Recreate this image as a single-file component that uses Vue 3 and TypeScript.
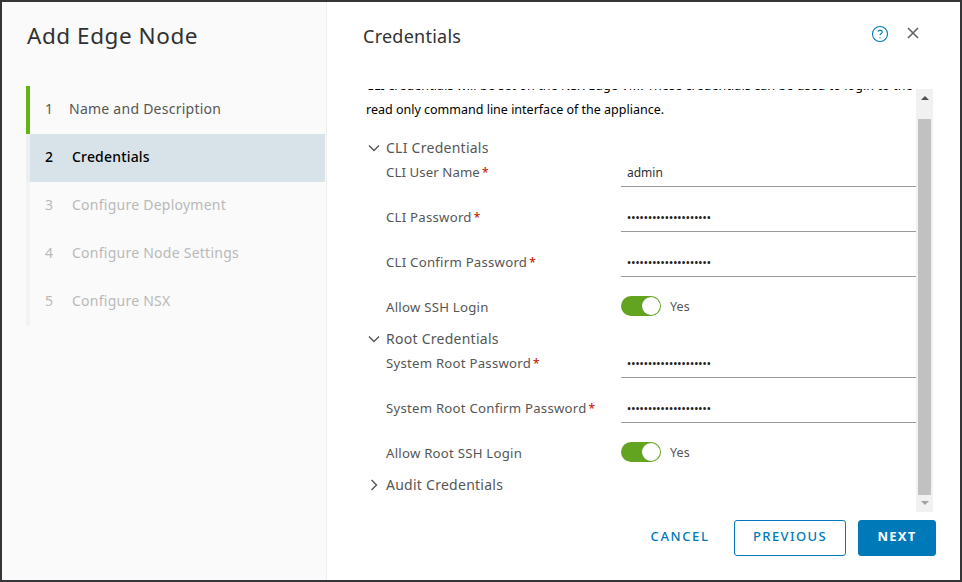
<script setup lang="ts">
import { ref } from 'vue'

interface Step {
  label: string
  state: 'done' | 'active' | 'pending'
}

interface Field {
  label: string
  kind: 'text' | 'password' | 'toggle'
  value: string
}

interface Section {
  title: string
  open: boolean
  fields: Field[]
}

const steps: Step[] = [
  { label: 'Name and Description', state: 'done' },
  { label: 'Credentials', state: 'active' },
  { label: 'Configure Deployment', state: 'pending' },
  { label: 'Configure Node Settings', state: 'pending' },
  { label: 'Configure NSX', state: 'pending' },
]

const secret = '•'.repeat(20)

const sections = ref<Section[]>([
  {
    title: 'CLI Credentials',
    open: true,
    fields: [
      { label: 'CLI User Name', kind: 'text', value: 'admin' },
      { label: 'CLI Password', kind: 'password', value: secret },
      { label: 'CLI Confirm Password', kind: 'password', value: secret },
      { label: 'Allow SSH Login', kind: 'toggle', value: 'Yes' },
    ],
  },
  {
    title: 'Root Credentials',
    open: true,
    fields: [
      { label: 'System Root Password', kind: 'password', value: secret },
      { label: 'System Root Confirm Password', kind: 'password', value: secret },
      { label: 'Allow Root SSH Login', kind: 'toggle', value: 'Yes' },
    ],
  },
  { title: 'Audit Credentials', open: false, fields: [] },
])
</script>

<template>
  <div class="wizard">
    <aside class="sidebar">
      <h1 class="wizard-title">Add Edge Node</h1>
      <ol class="steps">
        <li v-for="(step, i) in steps" :key="step.label" class="step" :class="step.state">
          <span class="num">{{ i + 1 }}</span>
          <span class="step-label">{{ step.label }}</span>
        </li>
      </ol>
    </aside>

    <main class="page">
      <header class="page-head">
        <h2 class="page-title">Credentials</h2>
        <svg class="help" viewBox="0 0 18 18">
          <circle cx="9" cy="9" r="7.5" />
          <path d="M6.7 6.4C7.5 5.7 8.3 5.4 9.2 5.4C10.5 5.4 11.3 6 11.3 7C11.3 8.5 9 8.5 9 10.3M9 12.2V13.3" />
        </svg>
        <svg class="close" viewBox="0 0 14 14"><path d="M2 2L12 12M12 2L2 12" /></svg>
      </header>

      <div class="viewport">
        <div class="content">
          <p class="intro">
            <span class="intro-first">CLI credentials will be set on the NSX Edge VM. These credentials can be used to login to the</span>
            <span>read only command line interface of the appliance.</span>
          </p>
          <section v-for="section in sections" :key="section.title" class="section">
            <div class="section-head" @click="section.open = !section.open">
              <svg class="caret" :class="{ closed: !section.open }" viewBox="0 0 12 12">
                <path d="M1 3.5L6 8.5L11 3.5" />
              </svg>
              <span class="section-title">{{ section.title }}</span>
            </div>
            <template v-if="section.open">
              <div v-for="field in section.fields" :key="field.label" class="row" :class="field.kind">
                <label class="label">{{ field.label }}<span v-if="field.kind !== 'toggle'" class="star">*</span></label>
                <div v-if="field.kind === 'toggle'" class="toggle-box">
                  <span class="switch"><span class="knob"></span></span>
                  <span class="yes">{{ field.value }}</span>
                </div>
                <div v-else class="input"><span>{{ field.value }}</span></div>
              </div>
            </template>
          </section>
        </div>
        <div class="scrollbar">
          <svg class="arrow up" viewBox="0 0 8 4"><path d="M0 4L4 0L8 4Z" /></svg>
          <div class="thumb"></div>
          <svg class="arrow down" viewBox="0 0 8 4"><path d="M0 0L4 4L8 0Z" /></svg>
        </div>
      </div>

      <footer class="actions">
        <button class="btn link">CANCEL</button>
        <button class="btn outline">PREVIOUS</button>
        <button class="btn primary">NEXT</button>
      </footer>
    </main>
  </div>
</template>

<style>
body {
  background: #fff;
}
</style>

<style scoped>
.wizard {
  box-sizing: border-box;
  width: 962px;
  height: 582px;
  display: flex;
  border: 2px solid #353436;
  background: #fff;
  color: #565656;
  font-family: "Noto Sans", "Open Sans", sans-serif;
  overflow: hidden;
}
.sidebar {
  box-sizing: border-box;
  width: 325px;
  flex: none;
  background: #fafafa;
  border-right: 1px solid #eee;
}
.wizard-title {
  margin: 18px 0 0 25px;
  font-size: 22.5px;
  font-weight: 400;
  line-height: 31px;
  letter-spacing: 0.55px;
  color: #313131;
}
.steps {
  list-style: none;
  margin: 35px 1px 0 24px;
  padding: 0;
}
.step {
  box-sizing: border-box;
  height: 48px;
  display: flex;
  align-items: center;
  padding: 0 0 4px 15px;
  border-left: 4px solid #f3f3f3;
  font-size: 14px;
  letter-spacing: 0.25px;
}
.num {
  width: 27px;
}
.step.done {
  border-color: #60b515;
}
.step.done .num {
  width: 24px;
}
.step.active {
  background: #d8e3e9;
  border-color: #eee;
  background-clip: padding-box;
  color: #000;
  font-weight: 500;
  letter-spacing: 0.18px;
}
.step.pending {
  color: #b9b9b9;
}
.page {
  flex: 1;
  display: flex;
  flex-direction: column;
}
.page-head {
  height: 87px;
  flex: none;
  display: flex;
  align-items: flex-start;
  padding: 0 40px 0 36px;
}
.page-title {
  flex: 1;
  margin: 19px 0 0;
  font-size: 18px;
  font-weight: 400;
  line-height: 30px;
  letter-spacing: 0.25px;
  color: #313131;
}
svg {
  display: block;
  fill: none;
}
.help {
  width: 18px;
  height: 18px;
  margin-top: 23px;
  stroke: #0079b8;
  stroke-width: 1.1;
}
.close {
  width: 14px;
  height: 14px;
  margin: 24px 0 0 17px;
  stroke: #666;
  stroke-width: 1.7;
}
.viewport {
  height: 423px;
  flex: none;
  display: flex;
  margin-left: 39px;
  overflow: hidden;
}
.content {
  width: 550px;
  height: 438px;
  margin-top: -15px;
  flex: none;
}
.intro {
  margin: 0;
  height: 61px;
  color: #000;
  font-size: 12.5px;
  line-height: 24px;
}
.intro span {
  display: block;
  white-space: nowrap;
}
.intro .intro-first {
  letter-spacing: 0.08px;
}
.section-head {
  height: 25px;
  display: flex;
  align-items: center;
  padding-left: 2px;
  font-size: 14px;
  letter-spacing: 0.26px;
}
.caret {
  width: 12px;
  height: 12px;
  margin-right: 6px;
  stroke: #565656;
  stroke-width: 1.4;
}
.caret.closed {
  transform: rotate(-90deg);
}
.row {
  height: 45px;
  display: flex;
  align-items: flex-start;
  padding-left: 20px;
}
.row.toggle {
  height: 31px;
}
.label {
  width: 235px;
  flex: none;
  font-size: 13.2px;
  line-height: 25px;
  letter-spacing: 0.24px;
  white-space: nowrap;
}
.row.text .label {
  letter-spacing: 0.1px;
}
.star {
  margin-left: 2px;
  font-size: 12px;
  font-weight: 500;
  line-height: 1;
  letter-spacing: 0;
  color: #c92100;
}
.input {
  box-sizing: border-box;
  width: 295px;
  height: 27px;
  padding-left: 6px;
  border-bottom: 1px solid #9a9a9a;
  color: #313131;
  font-size: 12px;
  line-height: 26px;
}
.row.password .input {
  font-size: 11px;
  line-height: 25px;
  letter-spacing: 0.06px;
  font-weight: 500;
  color: #222;
}
.toggle-box {
  display: flex;
  align-items: center;
  padding-top: 1px;
}
.switch {
  box-sizing: border-box;
  width: 40px;
  height: 20px;
  padding: 1px;
  display: flex;
  justify-content: flex-end;
  border-radius: 10px;
  background: #62a420;
}
.knob {
  width: 18px;
  height: 18px;
  border-radius: 50%;
  background: #fff;
}
.yes {
  margin-left: 9px;
  padding-top: 2px;
  font-size: 12.5px;
  line-height: 18px;
  letter-spacing: 0.1px;
}
.scrollbar {
  box-sizing: border-box;
  width: 17px;
  padding: 7px 2px 6px;
  display: flex;
  flex-direction: column;
  align-items: center;
  background: #f1f1f1;
}
.thumb {
  width: 13px;
  height: 376px;
  margin: 19px 0 6px;
  background: #c1c1c1;
}
.arrow {
  width: 8px;
  height: 4px;
  flex: none;
  fill: #505050;
}
.arrow.down {
  fill: #a3a3a3;
}
.actions {
  display: flex;
  justify-content: flex-end;
  padding: 8px 24px 0 0;
}
.btn {
  box-sizing: border-box;
  height: 36px;
  margin: 0;
  padding: 0 0 4px;
  border: 1px solid #0079b8;
  border-radius: 3px;
  background: #fff;
  color: #0079b8;
  font: 500 13px "Noto Sans", sans-serif;
  letter-spacing: 1.4px;
}
.link {
  width: 84px;
  margin-right: 12px;
  border-color: transparent;
  letter-spacing: 1.6px;
}
.outline {
  width: 112px;
  margin-right: 12px;
}
.primary {
  width: 78px;
  background: #0079b8;
  color: #fff;
  font-weight: 700;
  letter-spacing: 1.2px;
}
</style>
